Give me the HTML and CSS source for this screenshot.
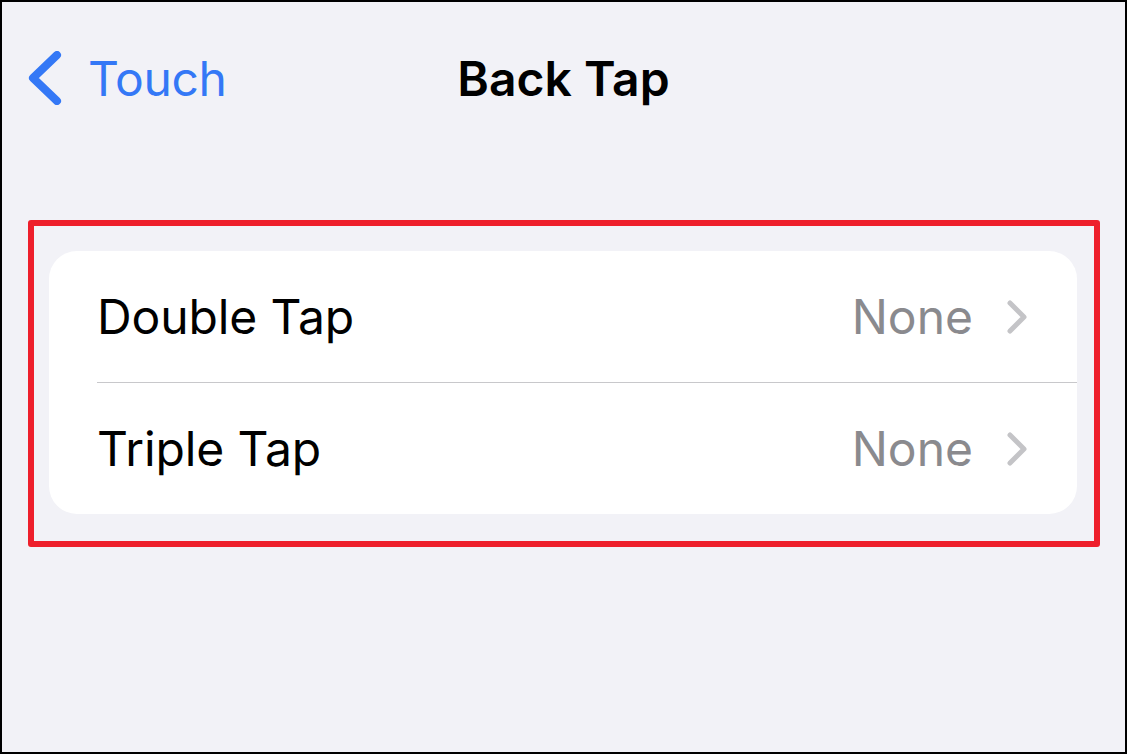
FILE: index.html
```html
<!DOCTYPE html>
<html lang="en">
<head>
  <meta charset="UTF-8">
  <title>Back Tap</title>
  <meta name="viewport" content="width=device-width, initial-scale=1.0">
  <link rel="stylesheet" href="styles.css">
</head>
<body>
  <div class="screen">
    <div class="navbar">
      <a class="back" href="#">
        <svg class="back-icon" width="34" height="54" viewBox="0 0 34 54">
          <path d="M29 4 L5 27 L29 50" fill="none" stroke="#3478f6" stroke-width="8" stroke-linecap="round" stroke-linejoin="round"/>
        </svg>
        <span>Touch</span>
      </a>
      <h1 class="title">Back Tap</h1>
      <div></div>
    </div>

    <div class="highlight">
      <div class="card">
        <div class="row">
          <span class="label">Double Tap</span>
          <span class="value">None</span>
          <svg class="chevron" width="22" height="36" viewBox="0 0 22 36">
            <path d="M4 4 L18 18 L4 32" fill="none" stroke="#c4c4c7" stroke-width="5" stroke-linecap="round" stroke-linejoin="round"/>
          </svg>
        </div>
        <div class="row">
          <span class="label">Triple Tap</span>
          <span class="value">None</span>
          <svg class="chevron" width="22" height="36" viewBox="0 0 22 36">
            <path d="M4 4 L18 18 L4 32" fill="none" stroke="#c4c4c7" stroke-width="5" stroke-linecap="round" stroke-linejoin="round"/>
          </svg>
        </div>
      </div>
    </div>
  </div>
</body>
</html>
```

FILE: styles.css
```css
html, body {
  margin: 0;
  padding: 0;
}
body {
  font-family: Inter, "Noto Sans", sans-serif;
  background: #f2f2f7;
}
.screen {
  width: 1127px;
  height: 754px;
  box-sizing: border-box;
  border: 2px solid #000;
  background: #f2f2f7;
}
.navbar {
  height: 152px;
  display: grid;
  grid-template-columns: 1fr auto 1fr;
  align-items: center;
}
.back {
  display: flex;
  align-items: center;
  gap: 26px;
  padding-left: 26px;
  color: #3478f6;
  text-decoration: none;
  font-size: 48px;
  letter-spacing: -0.3px;
}
.back-icon {
  display: block;
}
.title {
  margin: 0;
  font-size: 48px;
  font-weight: 600;
  letter-spacing: 0;
  color: #000;
}
.highlight {
  margin: 66px 25px 0 26px;
  border: 6px solid #ee1f2b;
  border-radius: 3px;
  padding: 25px 17px 27px 15px;
}
.card {
  background: #fff;
  border-radius: 28px;
}
.row {
  height: 131px;
  display: flex;
  align-items: center;
  margin-left: 48px;
  padding-right: 49px;
}
.row + .row {
  border-top: 1px solid #c8c8cb;
}
.label {
  flex: 1;
  font-size: 48px;
  color: #000;
  letter-spacing: -0.1px;
}
.value {
  font-size: 48px;
  color: #8a8a8e;
  letter-spacing: 0;
  margin-right: 33px;
}
.chevron {
  display: block;
}
```
